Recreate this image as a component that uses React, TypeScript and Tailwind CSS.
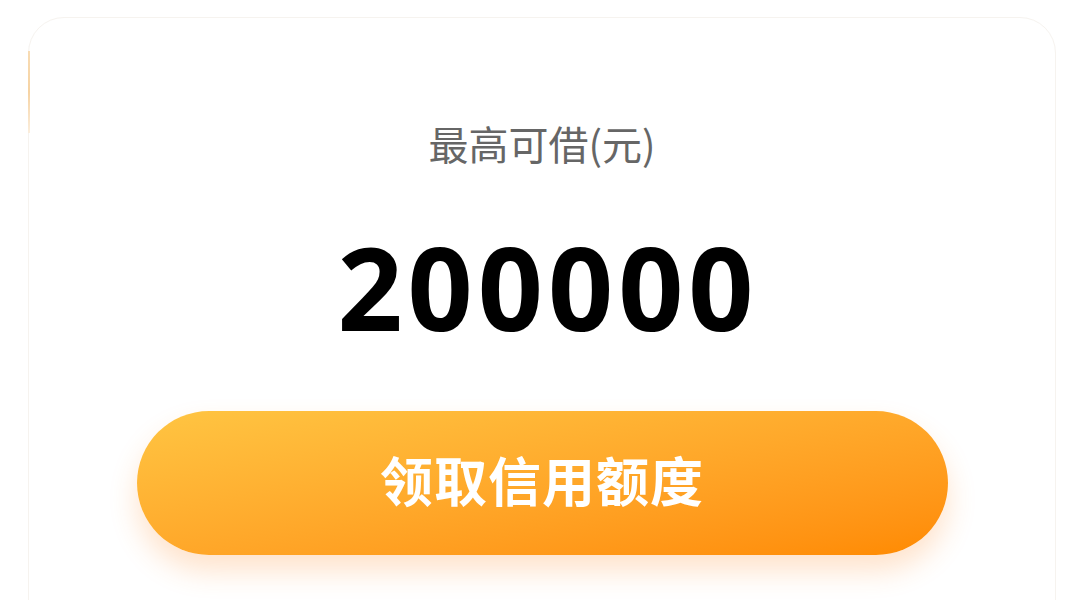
export default function App() {
  return (
    <div className="h-[600px] w-[1080px] overflow-hidden bg-white">
      <div className="relative ml-[28px] mr-[24px] mt-[17px] h-[640px] rounded-[36px] border border-[#f6f3ef] bg-white">
        <div className="absolute -left-px top-[33px] h-[82px] w-[2px] bg-gradient-to-b from-[#f8dcb4] via-[#f6d3a3] to-[#fbeedd]" />
        <div className="flex flex-col items-center">
          <p className="mt-[97px] font-['Noto_Sans_CJK_SC',sans-serif] text-[40px] leading-[56px] text-[#666666]">
            最高可借(元)
          </p>
          <p className="mt-[56px] pl-[12px] font-['Open_Sans','Noto_Sans',sans-serif] text-[114px] font-bold leading-[120px] tracking-[5px] text-black">
            200000
          </p>
          <button className="mt-[64px] flex h-[144px] w-[811px] items-center justify-center rounded-full bg-gradient-to-br from-[#ffc542] to-[#ff8a00] pb-[6px] shadow-[0_16px_28px_rgba(255,140,40,0.24)]">
            <span className="font-['Noto_Sans_CJK_SC',sans-serif] text-[53px] font-bold tracking-[1px] text-white">
              领取信用额度
            </span>
          </button>
        </div>
      </div>
    </div>
  );
}
